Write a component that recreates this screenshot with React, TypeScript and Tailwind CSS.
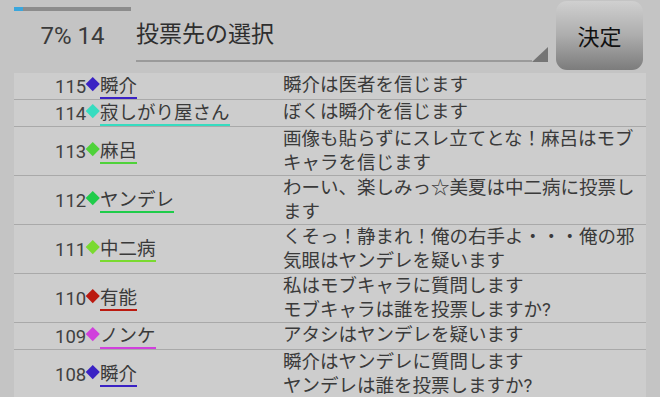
import React from "react";

type Vote = {
  no: number;
  name: string;
  color: string;
  lines: string[];
};

const votes: Vote[] = [
  { no: 115, name: "瞬介", color: "bg-[#3a22c4] border-[#3a22c4]", lines: ["瞬介は医者を信じます"] },
  { no: 114, name: "寂しがり屋さん", color: "bg-[#36dcc0] border-[#36dcc0]", lines: ["ぼくは瞬介を信じます"] },
  {
    no: 113,
    name: "麻呂",
    color: "bg-[#4fd23a] border-[#4fd23a]",
    lines: ["画像も貼らずにスレ立てとな！麻呂はモブ", "キャラを信じます"],
  },
  {
    no: 112,
    name: "ヤンデレ",
    color: "bg-[#1fcc4a] border-[#1fcc4a]",
    lines: ["わーい、楽しみっ☆美夏は中二病に投票し", "ます"],
  },
  {
    no: 111,
    name: "中二病",
    color: "bg-[#7ada30] border-[#7ada30]",
    lines: ["くそっ！静まれ！俺の右手よ・・・俺の邪", "気眼はヤンデレを疑います"],
  },
  {
    no: 110,
    name: "有能",
    color: "bg-[#bb1a10] border-[#bb1a10]",
    lines: ["私はモブキャラに質問します", "モブキャラは誰を投票しますか?"],
  },
  { no: 109, name: "ノンケ", color: "bg-[#d040dc] border-[#d040dc]", lines: ["アタシはヤンデレを疑います"] },
  {
    no: 108,
    name: "瞬介",
    color: "bg-[#3a22c4] border-[#3a22c4]",
    lines: ["瞬介はヤンデレに質問します", "ヤンデレは誰を投票しますか?"],
  },
];

export default function App() {
  return (
    <div
      className="w-[660px] h-[397px] overflow-hidden bg-[#c4c4c4] text-[#3c3c3c]"
      style={{ fontFamily: 'Roboto, "Noto Sans CJK JP", sans-serif' }}
    >
      {/* Header */}
      <div className="flex h-[73px]">
        <div className="w-[122px] ml-[14px] shrink-0">
          <div className="mt-[7px] h-[4px] w-[117px] bg-[#8c8c8c]">
            <div className="h-full w-[9px] bg-[#3aa6dc]" />
          </div>
          <div className="w-[117px] mt-[10px] text-center text-[24px] leading-[30px] text-[#3a3a3a]">
            7% 14
          </div>
        </div>

        <div className="w-[412px] shrink-0 flex flex-col">
          <div className="mt-[20px] h-[27px] text-[23px] leading-[30px] text-[#2e2e2e]">投票先の選択</div>
          <div className="flex items-end h-[15px]">
            <div className="flex-1 border-b-2 border-[#9a9a9a]" />
            <svg width="16" height="15" viewBox="0 0 16 15" className="block">
              <polygon points="16,0 16,15 0,15" fill="#757575" />
            </svg>
          </div>
        </div>

        <div className="ml-[8px] mt-[1px] w-[87px] h-[69px] rounded-[11px] bg-linear-to-b from-[#d0d0d0] via-[#adadad] to-[#7c7c7c] flex items-center justify-center pt-[3px] text-[22px] text-[#111]">
          決定
        </div>
      </div>

      {/* Vote list */}
      <div className="mx-[14px] bg-[#cdcdcd]">
        {votes.map((v) => (
          <div key={v.no} className="flex border-b-[1.5px] border-[#a9a9a9] pt-[1px]">
            <div className="w-[269px] shrink-0 flex items-center pl-[41px] text-[18.5px]">
              <span className="leading-[20px] text-[#404040]">{v.no}</span>
              <span className={`inline-block w-[9.5px] h-[9.5px] rotate-45 mx-[2.2px] mb-[5px] ${v.color}`} />
              <span className={`inline-block leading-[20px] border-b-2 mt-[2px] pb-[1px] ${v.color} bg-transparent text-[#3a3a3a]`}>
                {v.name}
              </span>
            </div>
            <div className="flex-1 text-[18.5px] leading-[23.5px] text-[#3a3a3a] whitespace-nowrap">
              {v.lines.map((l, i) => (
                <div key={i}>{l}</div>
              ))}
            </div>
          </div>
        ))}
      </div>
    </div>
  );
}
